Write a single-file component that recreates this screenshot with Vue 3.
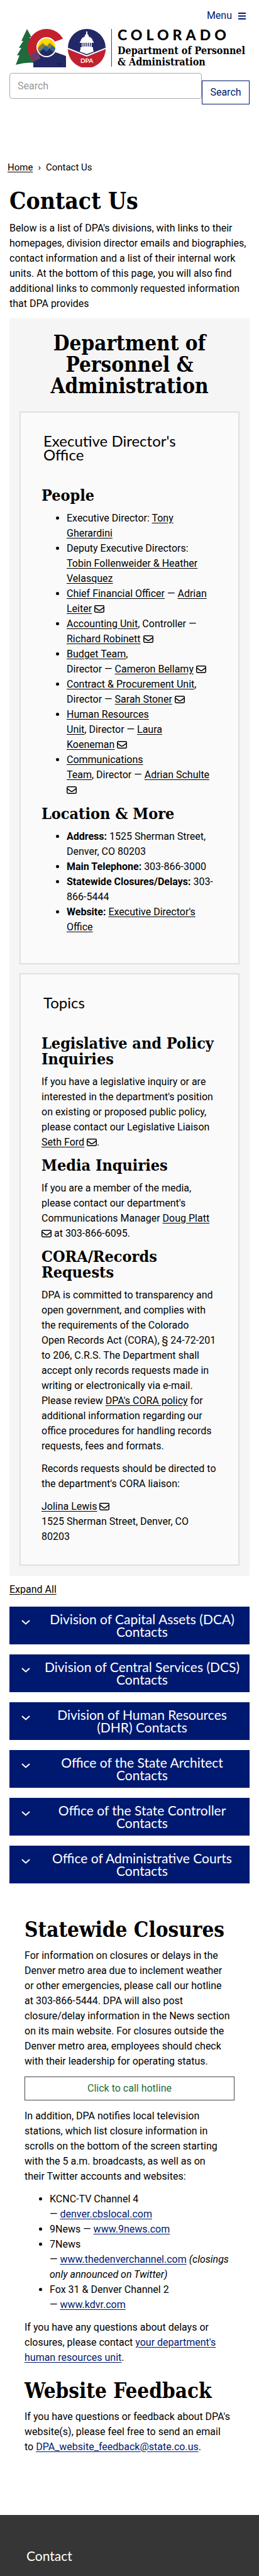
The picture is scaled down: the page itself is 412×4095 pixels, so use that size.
<script setup>
import { h } from 'vue'

const Mail = () =>
  h('svg', { viewBox: '0 0 16 12', width: 16, height: 12, role: 'img', 'aria-label': 'email' }, [
    h('rect', { x: 0.75, y: 0.75, width: 14.5, height: 10.5, rx: 1.4, fill: 'none', stroke: 'currentColor', 'stroke-width': 1.5 }),
    h('path', { d: 'M1 3.6 6.4 7.7Q8 8.9 9.6 7.7L15 3.6', fill: 'none', stroke: 'currentColor', 'stroke-width': 1.5 })
  ])

const divisions = [
  'Division of Capital Assets (DCA) Contacts',
  'Division of Central Services (DCS) Contacts',
  'Division of Human Resources (DHR) Contacts',
  'Office of the State Architect Contacts',
  'Office of the State Controller Contacts',
  'Office of Administrative Courts Contacts'
]
</script>

<template>
  <div class="page">
    <header>
      <button class="menu" type="button">
        Menu
        <svg width="12" height="11" viewBox="0 0 12 11" aria-hidden="true"><path d="M0 1h12M0 5.5h12M0 10h12" stroke="#001970" stroke-width="2" /></svg>
      </button>
      <a class="brand" href="#">
        <svg width="143" height="62" viewBox="0 0 143 62" aria-hidden="true">
          <path d="M18 1 25 14 22 14 28 24 25 25 34 40 40 56 Q20 52 0 58 L6 43 2 43 9 31 5 31 12 20 9 20Z" fill="#1f6b3b" />
          <clipPath id="c-shape"><path d="M48 26 80 15V0H17V62H80V44L48 33Z" /></clipPath>
          <g clip-path="url(#c-shape)">
            <circle cx="49" cy="31" r="30" fill="#c3202f" />
            <path d="M28 53 48 31 80 40V62H28Z" fill="#232868" />
            <path d="M22 44 36 34 39 48 29 53Z" fill="#6c3a68" />
          </g>
          <circle cx="49" cy="30" r="16" fill="#fff" />
          <circle cx="49" cy="30" r="14" fill="#ffd600" />
          <path d="M35 31 43 23 49 29 54 23 63 31Q62 42 49 44 36 42 35 31Z" fill="#86803e" />
          <path d="M37 37 48 27 54 33 58 27 63 32Q61 42 49 44 40 42 37 37Z" fill="#2f6594" />
          <path d="M38 38 44 33 49 37 54 32 60 38Q55 44 49 44 42 44 38 38Z" fill="#232868" />
          <text x="66" y="60" class="tm">™</text>
          <circle cx="113" cy="31" r="30" fill="#232868" />
          <path d="M83 33 113 45 143 33A30 30 0 0 1 83 33Z" fill="#c3202f" />
          <path d="M83 32 113 44 143 32" fill="none" stroke="#fff" stroke-width="2" />
          <path d="M112 5h2v4l2 2v2q6 2 7 8h1v2h-22v-2h1q1-6 7-8v-2l2-2Z" fill="#fff" />
          <path d="M105 23h16v7h2v3l1 4-11 4-11-4 1-4v-3h2Z" fill="#fff" />
          <path d="M107 23v6M110 23v6M113 23v6M116 23v6M119 23v6" stroke="#232868" stroke-width="1.5" />
          <text x="113" y="55" text-anchor="middle" class="dpa">DPA</text>
        </svg>
        <span class="wordmark">
          <span class="state">COLORADO</span>
          <span class="dept">Department of Personnel<br>&amp; Administration</span>
        </span>
      </a>
      <form class="search" @submit.prevent>
        <input type="search" placeholder="Search" aria-label="Search">
        <button type="submit">Search</button>
      </form>
    </header>

    <nav class="crumbs" aria-label="Breadcrumb"><a href="#">Home</a><span>›</span><span>Contact Us</span></nav>

    <main>
      <h1>Contact Us</h1>
      <p>Below is a list of DPA's divisions, with links to their homepages, division director emails and biographies, contact information and a list of their internal work units. At the bottom of this page, you will also find additional links to commonly requested information that DPA provides</p>

      <section class="department">
        <h2>Department of Personnel &amp; Administration</h2>
        <article class="card">
          <h3 class="title">Executive Director's Office</h3>
          <h3>People</h3>
          <ul>
            <li>Executive Director: <a href="#">Tony<br>Gherardini</a></li>
            <li>Deputy Executive Directors:<br><a href="#">Tobin Follenweider &amp; Heather<br>Velasquez</a></li>
            <li><a href="#">Chief Financial Officer</a> — <a href="#">Adrian<br>Leiter</a> <Mail /></li>
            <li><a href="#">Accounting Unit</a>, Controller —<br><a href="#">Richard Robinett</a> <Mail /></li>
            <li><a href="#">Budget Team</a>,<br>Director — <a href="#">Cameron Bellamy</a> <Mail /></li>
            <li><a href="#">Contract &amp; Procurement Unit</a>,<br>Director — <a href="#">Sarah Stoner</a> <Mail /></li>
            <li><a href="#">Human Resources<br>Unit</a>, Director — <a href="#">Laura<br>Koeneman</a> <Mail /></li>
            <li><a href="#">Communications<br>Team</a>, Director — <a href="#">Adrian Schulte</a><br><Mail /></li>
          </ul>
          <h3>Location &amp; More</h3>
          <ul>
            <li><strong>Address:</strong> 1525 Sherman Street,<br>Denver, CO 80203</li>
            <li><strong>Main Telephone:</strong> 303-866-3000</li>
            <li><strong>Statewide Closures/Delays:</strong> 303-<br>866-5444</li>
            <li><strong>Website:</strong> <a href="#">Executive Director's<br>Office</a></li>
          </ul>
        </article>
        <article class="card topics">
          <h3 class="title">Topics</h3>
          <h3>Legislative and Policy Inquiries</h3>
          <p>If you have a legislative inquiry or are<br>interested in the department's position<br>on existing or proposed public policy,<br>please contact our Legislative Liaison<br><a href="#">Seth Ford</a> <Mail />.</p>
          <h3>Media Inquiries</h3>
          <p>If you are a member of the media,<br>please contact our department's<br>Communications Manager <a href="#">Doug Platt</a><br><Mail /> at 303-866-6095.</p>
          <h3>CORA/Records<br>Requests</h3>
          <p>DPA is committed to transparency and<br>open government, and complies with<br>the requirements of the Colorado<br>Open Records Act (CORA), § 24-72-201<br>to 206, C.R.S. The Department shall<br>accept only records requests made in<br>writing or electronically via e-mail.<br>Please review <a href="#">DPA's CORA policy</a> for<br>additional information regarding our<br>office procedures for handling records<br>requests, fees and formats.</p>
          <p>Records requests should be directed to<br>the department's CORA liaison:</p>
          <p><a href="#">Jolina Lewis</a> <Mail /><br>1525 Sherman Street, Denver, CO<br>80203</p>
        </article>
      </section>

      <a class="expand" href="#">Expand All</a>
      <div class="accordion">
        <button v-for="d in divisions" :key="d" type="button" aria-expanded="false">
          <svg width="14" height="8" viewBox="0 0 14 8" aria-hidden="true"><path d="M1 1l6 5.500L13 1" fill="none" stroke="currentColor" stroke-width="2" /></svg>
          <span>{{ d }}</span>
        </button>
      </div>

      <section class="info">
        <h2>Statewide Closures</h2>
        <p>For information on closures or delays in the<br>Denver metro area due to inclement weather<br>or other emergencies, please call our hotline<br>at 303-866-5444. DPA will also post<br>closure/delay information in the News section<br>on its main website. For closures outside the<br>Denver metro area, employees should check<br>with their leadership for operating status.</p>
        <a class="call" href="#">Click to call hotline</a>
        <p>In addition, DPA notifies local television<br>stations, which list closure information in<br>scrolls on the bottom of the screen starting<br>with the 5 a.m. broadcasts, as well as on<br>their Twitter accounts and websites:</p>
        <ul>
          <li>KCNC-TV Channel 4<br>— <a href="#">denver.cbslocal.com</a></li>
          <li>9News — <a href="#">www.9news.com</a></li>
          <li>7News<br>— <a href="#">www.thedenverchannel.com</a> <em>(closings<br>only announced on Twitter)</em></li>
          <li>Fox 31 &amp; Denver Channel 2<br>— <a href="#">www.kdvr.com</a></li>
        </ul>
        <p>If you have any questions about delays or<br>closures, please contact <a href="#">your department's<br>human resources unit</a>.</p>
        <h2 class="feedback">Website Feedback</h2>
        <p>If you have questions or feedback about DPA's<br>website(s), please feel free to send an email<br>to <a href="#">DPA_website_feedback@state.co.us</a>.</p>
      </section>
    </main>
    <footer><h2>Contact</h2></footer>
  </div>
</template>

<style>
body { background: #fff; }
</style>

<style scoped>
.page {
  --slab: "DejaVu Serif Condensed", "DejaVu Serif", serif;
  --sans: Lato, "Open Sans", sans-serif;
  display: flex;
  flex-direction: column;
  min-height: 100vh;
  color: #000;
  font: 16px/24px Roboto, "Open Sans", sans-serif;
}
.page, .page * { box-sizing: border-box; }
h1, h2, h3, p, ul { margin: 0; }
a { color: inherit; text-underline-offset: 2px; }
button, input { font: inherit; }
header { padding: 13px 15px 0; }
.menu {
  display: flex;
  align-items: center;
  gap: 10px;
  margin: 0 6px 0 auto;
  padding: 0;
  border: 0;
  background: none;
  color: #001970;
}
.brand { display: flex; align-items: flex-start; gap: 9px; margin: 8px 0 0 10px; color: #000; text-decoration: none; }
.brand svg { flex: none; }
.tm { font: 6px Lato, sans-serif; }
.dpa { font: bold 10px Lato, sans-serif; fill: #fff; }
.wordmark { display: flex; flex-direction: column; gap: 8px; height: 60px; margin-top: 1px; padding-left: 9px; border-left: 1px solid #444; white-space: nowrap; }
.state { font: 900 23px/18px var(--sans); letter-spacing: 6px; }
.dept { font: bold 16px/18px var(--slab); }
.search { display: flex; align-items: flex-start; margin-top: 9px; }
.search input { flex: 1; min-width: 0; height: 41px; padding: 0 12px; border: 1px solid #aaa; border-radius: 4px; background: #fff; }
.search input::placeholder { color: #999; opacity: 1; }
.search button { width: 76px; height: 38px; margin-top: 12px; padding: 0; border: 1px solid #001970; background: #fff; color: #001970; }
.crumbs { display: flex; gap: 8px; margin: 88px 12px 0; font-size: 15px; }
main { padding: 0 15px; }
h1 { margin: 21px 0 12px; font: bold 37px/40px var(--slab); }
h2 { font: bold 33px/34px var(--slab); }
h3 { font: bold 25px/25px var(--slab); }
.department { margin-top: 11px; padding: 23px 16px 16px; background: #f5f5f5; }
.department h2 { margin: 0 32px 23px; text-align: center; }
.card { padding: 34px 24px 32px 33px; border: 2px solid #e0e0e0; background: #fafafa; }
.card .title { margin: 0 12px 41px 3px; font: 24px/22px var(--sans); }
.card ul { margin: 12px 0 13px; padding-left: 40px; }
.card p { margin: 12px 0; }
.card.topics { margin-top: 14px; padding-bottom: 20px; }
.card svg { vertical-align: -1px; }
.expand { display: inline-block; margin: 10px 0 15px; }
.accordion { display: flex; flex-direction: column; gap: 16px; }
.accordion button { display: flex; gap: 20px; padding: 10px 13px 10px 19px; border: 0; background: #001970; color: #fff; font: 21px/20px var(--sans); }
.accordion svg { flex: none; margin-top: 11px; }
.accordion span { flex: 1; }
.info { padding: 57px 16px 84px 24px; }
.info p { margin: 12px 0; }
.info ul { padding-left: 40px; }
.info a { color: #001970; }
.info .call { display: block; margin: 11px 8px 13px 0; padding: 6px; border: 1px solid #444; color: #1f6b3b; text-align: center; text-decoration: none; }
.info .feedback { margin-top: 24px; }
footer { flex: 1; padding: 53px 42px 20px; background: #363636; color: #fff; }
footer h2 { font: 21px/24px var(--sans); }
</style>
